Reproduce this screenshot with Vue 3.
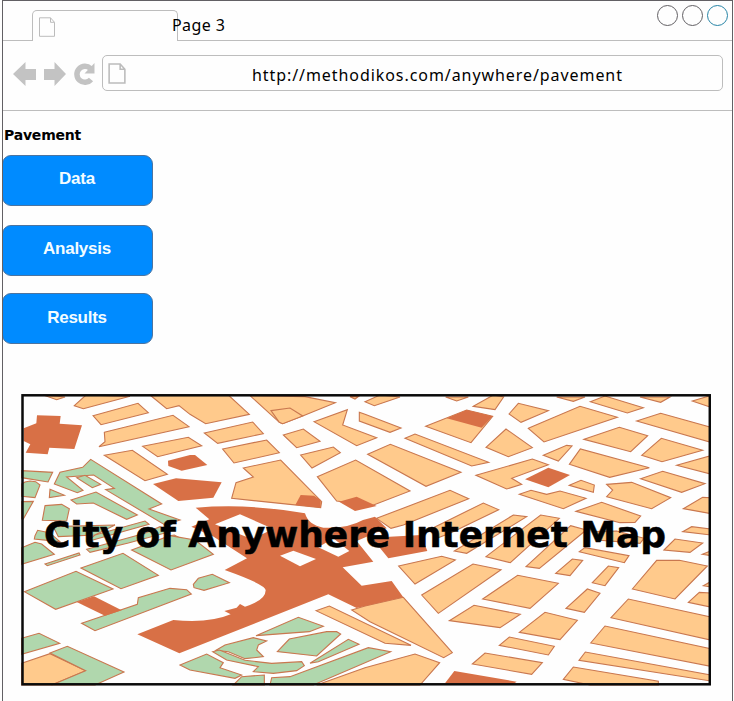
<script setup>
const actions = ['Data', 'Analysis', 'Results']

// The city plan is stored as sheets. Each sheet has its own origin and is drawn at three units per pixel.
const sheets = [
  {
    x: 15, y: 385,
    block: [
      '85,30 150,36 125,44', '178,62 213,30 345,34 205,71', '234,92 369,55 400,83 258,119',
      '268,142 474,91 522,125 252,185 270,170', '383,184 520,157 560,182 428,215',
      '268,211 352,196 457,268 390,287', '405,30 455,71 492,62 525,88 572,116 703,88 640,30'
    ],
    park: [
      '20,257 113,262 99,291 20,278', '20,297 30,291 45,288 62,290 75,300 60,338 20,334', '20,350 55,349 25,402 20,402',
      '105,313 148,331 103,338',
      '118,297 135,262 203,247 227,223 440,357 402,372 495,405 479,410 450,420 272,314 298,310 236,270 155,276 204,316 187,323',
      '185,278 210,271 257,298 232,308', '168,345 243,321 367,390 335,403 235,354 185,357',
      '90,362 140,358 163,371 155,408 82,406', '60,452 68,436 105,444 135,470 58,462',
      '115,425 300,420 240,450 130,455', '240,450 390,408 402,418 215,470', '215,493 390,445 435,425 465,440 340,474 225,502',
      '450,455 478,450 500,462 440,470'
    ],
    brick: [
      '66,91 137,93 134,116 201,121 178,192 103,188 98,208 32,203 46,178 26,168 26,130 64,115',
      '459,227 525,210 540,210 577,240 500,257 460,243', '414,297 483,280 620,292 595,338 490,348'
    ]
  },
  {
    x: 190, y: 385,
    block: [
      '43,144 188,111 220,146 83,175', '98,192 230,165 268,203 132,234',
      '160,249 272,225 395,350 392,368 125,340 138,293 190,276', '180,32 345,35 436,53 338,93 278,116 268,112',
      '243,77 300,69 338,93 278,116 268,112', '280,150 340,132 390,169 320,188', '332,210 430,186 451,203 366,249',
      '372,110 472,74 458,120 560,158 500,182', '382,275 497,225 660,318 545,362 440,348',
      '480,35 505,35 495,42', '508,82 525,88 633,129 600,142 508,108', '525,50 570,30 630,36 553,62'
    ],
    park: [],
    brick: ['316,360 332,330 372,332 392,345 392,368', '447,350 500,335 560,363 495,378']
  },
  {
    x: 365, y: 385,
    block: [
      '242,36 310,36 275,48', '325,64 385,30 416,36 390,74', '432,87 460,55 550,77 468,112',
      '182,124 305,75 383,94 318,173', '363,187 423,132 502,188 430,215', '120,160 150,147 371,232 320,243',
      '8,208 76,178 288,262 183,304', '333,271 502,222 550,239 440,280 470,298 425,312',
      '463,328 498,316 545,328 585,318 663,340 595,371', '490,130 645,64 757,97 537,171',
      '35,400 255,316 311,341 115,420 78,430', '202,430 355,354 401,374 255,445 215,460',
      '445,390 485,395 305,505 268,498', '363,515 527,390 583,400 436,533', '483,545 617,422 664,435 523,550'
    ],
    park: [],
    brick: ['245,100 305,75 383,94 350,128', '480,283 550,248 615,270 550,307']
  },
  {
    x: 540, y: 385,
    block: [
      '50,36 135,36 100,49', '151,50 195,33 310,68 262,84', '300,36 390,36 362,52', '457,48 510,32 510,66',
      '290,108 362,85 512,127 512,172', '132,163 238,127 323,152 272,200', '305,211 364,160 488,196 366,230',
      '10,211 80,181 96,183 55,228', '88,238 121,192 328,248 209,277', '410,241 512,212 512,267',
      '302,281 368,259 495,296 425,322', '88,301 123,286 163,300 160,322',
      '200,298 275,292 392,338 335,371 200,335 218,315', '108,379 185,352 302,393 285,412 240,413',
      '430,371 488,337 512,338 512,386', '428,440 455,425 512,432 512,450', '165,440 230,438 312,460 300,475 170,465'
    ],
    park: [],
    brick: []
  },
  {
    x: 15, y: 535,
    block: ['20,385 105,356 212,407 110,450 20,450'],
    park: [
      '20,38 60,22 80,27 118,58 20,88', '90,87 192,54 195,60 97,92', '198,99 324,55 430,121 318,161',
      '28,170 183,109 294,162 122,223', '350,45 465,2 540,15 595,58 468,105',
      '200,265 367,208 370,188 465,160 515,164 529,177 240,287', '20,310 72,295 134,325 20,358',
      '105,354 157,334 327,411 240,450 110,450 212,407'
    ],
    brick: ['185,201 237,184 320,226 270,242']
  },
  {
    x: 190, y: 535,
    block: ['378,227 418,213 663,331 585,325', '380,450 525,398 675,357 749,383 690,450', '485,225 525,213 640,187 787,353 761,368 540,260'],
    park: [
      '198,302 325,247 400,274 358,290', '10,148 25,130 67,118 118,143 42,166 12,158',
      '78,346 105,330 190,308 230,318 205,330 200,345 220,365 165,371 115,350',
      '262,350 298,312 410,290 440,290 452,297 380,363',
      '68,350 88,345 165,376 245,385 335,380 343,392 320,407 250,415 190,410 205,395 110,375',
      '-30,390 50,357 100,383 90,398 155,420 135,430 0,405', '130,450 155,425 223,420 223,450',
      '240,450 245,428 300,425 535,338 602,350 370,450', '360,385 475,313 507,328 385,380'
    ],
    brick: ['545,8 693,0 712,48 595,70']
  },
  {
    x: 365, y: 535,
    block: [
      '101,93 230,64 271,75 150,147', '170,180 324,87 408,104 220,235', '253,257 327,211 466,238 405,278',
      '463,292 540,232 637,256 585,314', '353,192 458,121 580,145 495,220', '403,331 433,306 568,334 550,360',
      '322,387 360,354 532,383 500,418'
    ],
    park: [],
    brick: ['240,445 268,408 455,440 440,450']
  },
  {
    x: 540, y: 535,
    block: [
      '118,50 135,38 267,62 253,83', '372,45 405,12 488,24 450,52', '487,58 512,48 512,62',
      '277,162 350,76 418,76 502,93 405,192', '490,152 512,140 512,156', '445,202 478,172 512,174 512,216',
      '213,248 265,192 512,246 512,315', '152,324 195,273 512,341 512,394', '117,376 136,351 512,420 512,438',
      '70,433 100,396 355,439 355,450 150,450', '47,115 97,72 128,76 90,122', '157,143 205,93 236,98 195,152',
      '78,220 142,162 180,175 133,232'
    ],
    park: [],
    brick: []
  }
]

const station =
  'M17,-82 Q180,-95 345,-65 Q355,-30 400,-22 Q470,-18 519,-45 L555,-55 L590,-20 L500,18 L550,80 L458,97 L515,152 L605,138 L640,187 L500,219 L415,178 L-32,355 L-158,298 L-50,255 Q60,265 122,238 L103,228 L140,218 L150,207 L165,215 Q228,196 227,165 Q225,148 104,105 L171,70 L71,5 L4,-25 L58,-47 Z'
const courts = ['75,-32 150,-62 250,-18 185,12', '270,62 310,47 378,72 330,94', '385,37 430,10 478,48 445,65']
</script>

<template>
  <div class="window">
    <header class="tabs">
      <div class="tab">
        <svg class="tab-page" viewBox="0 0 16 20"><path d="M.5 .8h11l4 4.5v14H.5z M11.5 .8v4.5h4" /></svg>
        <span class="tab-title">Page 3</span>
      </div>
      <div class="controls">
        <i class="dot"></i><i class="dot"></i><i class="dot active"></i>
      </div>
    </header>

    <nav class="toolbar">
      <svg class="nav-icon" viewBox="0 0 24 24"><path d="M0 12 12.5 0v7H23v11H12.5v6z" /></svg>
      <svg class="nav-icon" viewBox="0 0 24 24"><path d="M23 12 11.5 0v7H1v11h10.500v6z" /></svg>
      <svg class="nav-icon" viewBox="0 0 24 24">
        <path class="loop" d="M17.500 6.500A8 8 0 1 0 18 17.500" />
        <path d="M21.500 1v10.500H11.500z" />
      </svg>
      <div class="address">
        <svg class="address-page" viewBox="0 0 17 20"><path d="M1 1h10.500l4.500 5v13H1z M11.500 1v5h4.500" /></svg>
        <span class="url">http://methodikos.com/anywhere/pavement</span>
      </div>
    </nav>

    <main class="content">
      <h1>Pavement</h1>
      <div class="actions">
        <button v-for="label in actions" :key="label" type="button">{{ label }}</button>
      </div>

      <svg class="map" viewBox="21 394 690 292">
        <rect class="ground" x="22" y="395" width="688" height="290" />
        <g v-for="(s, i) in sheets" :key="i" :transform="`translate(${s.x} ${s.y}) scale(.33333)`">
          <polygon v-for="p in s.block" :key="p" class="block" :points="p" />
          <polygon v-for="p in s.park" :key="p" class="park" :points="p" />
          <polygon v-for="p in s.brick" :key="p" class="brick" :points="p" />
        </g>
        <g transform="translate(190 535) scale(.33333)">
          <path class="brick" :d="station" />
          <polygon v-for="p in courts" :key="p" class="ground" :points="p" />
        </g>
        <rect class="frame" x="22.500" y="395.300" width="687.300" height="289" />
        <text class="map-title" x="44" y="547" textLength="622">City of Anywhere Internet Map</text>
      </svg>
    </main>
  </div>
</template>

<style>
body {
  margin: 0;
  background: #fefefe;
  overflow: hidden;
}
</style>

<style scoped>
.window {
  box-sizing: border-box;
  width: 731px;
  height: 701px;
  margin-left: 2px;
  border: 1px solid #626064;
  border-bottom: 0;
  overflow: hidden;
  background: #fefefe;
  color: #000;
}
.tabs {
  display: flex;
  justify-content: space-between;
  align-items: flex-end;
  box-sizing: border-box;
  height: 40px;
  padding-left: 29px;
  border-bottom: 1px solid #bdbdbd;
}
.tab {
  display: flex;
  align-items: center;
  box-sizing: border-box;
  width: 146px;
  height: 31px;
  margin-bottom: -1px;
  padding-left: 6px;
  border: 1px solid #bdbdbd;
  border-bottom: 0;
  border-radius: 5px 5px 0 0;
  background: #fefefe;
}
.tab-page {
  flex: none;
  width: 16px;
  height: 20px;
  margin-top: 1px;
  fill: none;
  stroke: #bcbcbc;
  stroke-width: 1;
}
.tab-title {
  margin: 0 0 2px 117px;
  font: 16px/20px "Noto Sans", "Open Sans", sans-serif;
  letter-spacing: .4px;
  white-space: nowrap;
}
.controls {
  display: flex;
  align-self: flex-start;
  gap: 4px;
  padding: 4px 4px 0 0;
}
.dot {
  box-sizing: border-box;
  width: 21px;
  height: 21px;
  border: 1px solid #626064;
  border-radius: 50%;
}
.dot.active {
  border-color: #2684a6;
}
.toolbar {
  display: flex;
  align-items: center;
  box-sizing: border-box;
  height: 70px;
  padding: 0 9px 6px 10px;
  border-bottom: 1px solid #bdbdbd;
}
.nav-icon {
  flex: none;
  width: 24px;
  height: 24px;
  margin: 3px 6px 0 0;
  fill: #c3c3c3;
}
.loop {
  fill: none;
  stroke: #c3c3c3;
  stroke-width: 5.500;
}
.address {
  display: flex;
  align-items: center;
  flex: 1;
  box-sizing: border-box;
  height: 36px;
  margin-top: 1px;
  margin-left: -1px;
  padding-left: 5px;
  border: 1px solid #bdbdbd;
  border-radius: 5px;
}
.address-page {
  flex: none;
  width: 18px;
  height: 21px;
  fill: none;
  stroke: #bcbcbc;
  stroke-width: 1.500;
}
.url {
  margin-left: 126px;
  margin-top: 4px;
  font: 16px/20px "Noto Sans", "Open Sans", sans-serif;
  letter-spacing: .93px;
}
h1 {
  margin: 0;
  padding: 15px 0 0 1px;
  font: bold 14px/18px "DejaVu Sans", Verdana, sans-serif;
  letter-spacing: -.2px;
}
.actions {
  display: flex;
  flex-direction: column;
  align-items: flex-start;
  padding-top: 11px;
  margin-left: -1px;
}
button {
  box-sizing: border-box;
  width: 151px;
  height: 51px;
  margin-bottom: 19px;
  padding: 0 1px 3px 0;
  border: 1px solid #4c74a0;
  border-radius: 9px;
  background: #008bff;
  color: #f3fcff;
  font: bold 17px/20px "Liberation Sans", Arial, sans-serif;
  letter-spacing: -.25px;
}
button:nth-child(2) {
  margin-bottom: 17px;
}
button:last-child {
  margin-bottom: 0;
  padding-bottom: 1px;
}
.map {
  display: block;
  width: 690px;
  height: 292px;
  margin: 50px 0 0 18px;
}
.ground {
  fill: #fefefe;
}
.block,
.park {
  stroke: #c9774f;
  stroke-width: 3.300;
}
.block {
  fill: #ffca8c;
}
.park {
  fill: #b0d7ad;
}
.brick {
  fill: #d87046;
}
.frame {
  fill: none;
  stroke: #0a0a0a;
  stroke-width: 2.500;
}
.map-title {
  font: bold 36px "DejaVu Sans", Verdana, sans-serif;
  stroke: #000;
  stroke-width: .5;
}
</style>
